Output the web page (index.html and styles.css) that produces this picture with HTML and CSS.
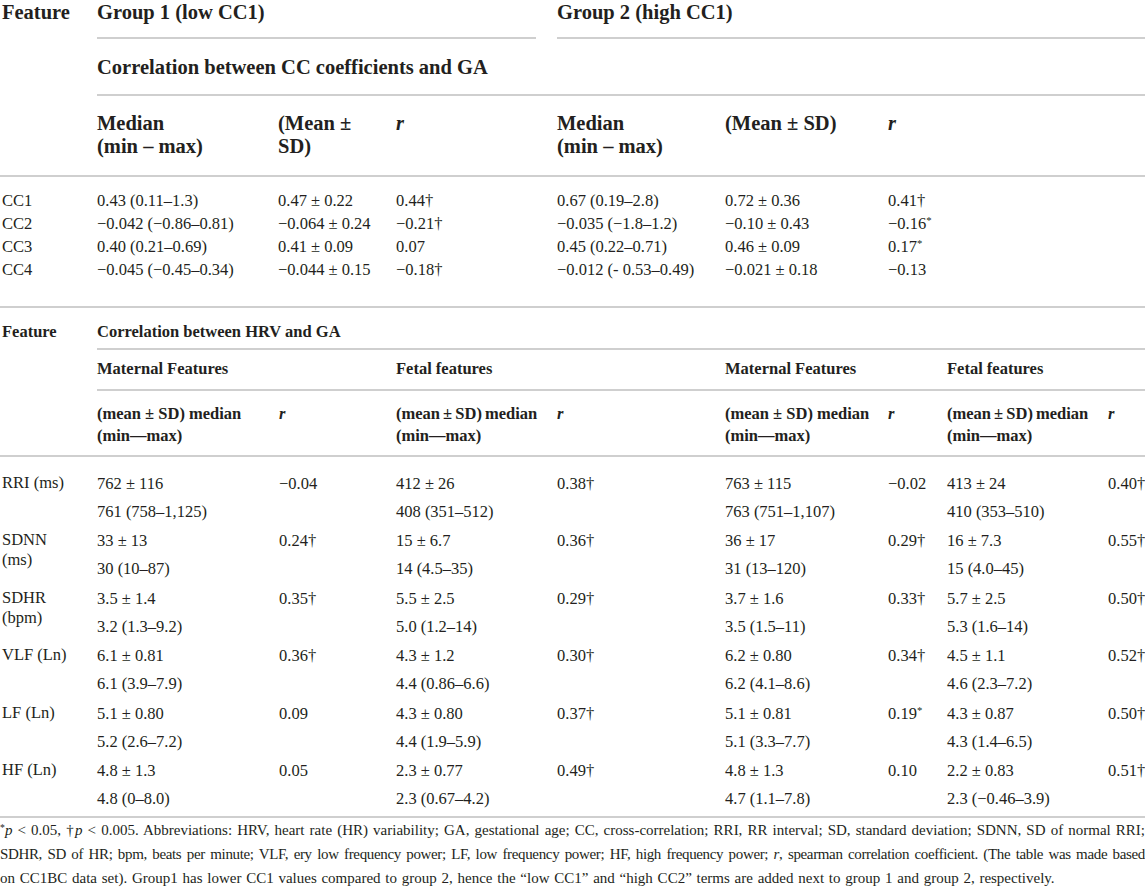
FILE: index.html
```html
<!DOCTYPE html>
<html lang="en">
<head>
    <meta charset="UTF-8">
    <title>CC coefficients and HRV vs GA</title>
    <link rel="stylesheet" href="styles.css">
</head>
<body>
    <div class="page">
        <!-- Part 1: cross-correlation coefficients -->
        <table class="cc">
            <colgroup>
                <col class="col-feature">
                <col class="cc-g1-median">
                <col class="cc-g1-mean">
                <col class="cc-g1-r">
                <col class="cc-g2-median">
                <col class="cc-g2-mean">
                <col class="cc-g2-r">
            </colgroup>
            <thead>
                <tr class="row-groups">
                    <th rowspan="3" class="feature rule">Feature</th>
                    <th colspan="3"><div class="group rule group-first">Group 1 (low CC1)</div></th>
                    <th colspan="3"><div class="group rule">Group 2 (high CC1)</div></th>
                </tr>
                <tr class="row-title">
                    <th colspan="6" class="rule">Correlation between CC coefficients and GA</th>
                </tr>
                <tr class="row-cols">
                    <th class="rule">Median<br>(min – max)</th>
                    <th class="rule">(Mean ±<br>SD)</th>
                    <th class="rule"><i>r</i></th>
                    <th class="rule">Median<br>(min – max)</th>
                    <th class="rule">(Mean ± SD)</th>
                    <th class="rule"><i>r</i></th>
                </tr>
            </thead>
            <tbody>
                <tr class="first">
                    <td class="feature">CC1</td>
                    <td>0.43 (0.11–1.3)</td>
                    <td>0.47 ± 0.22</td>
                    <td>0.44†</td>
                    <td>0.67 (0.19–2.8)</td>
                    <td>0.72 ± 0.36</td>
                    <td>0.41†</td>
                </tr>
                <tr>
                    <td class="feature">CC2</td>
                    <td>−0.042 (−0.86–0.81)</td>
                    <td>−0.064 ± 0.24</td>
                    <td>−0.21†</td>
                    <td>−0.035 (−1.8–1.2)</td>
                    <td>−0.10 ± 0.43</td>
                    <td>−0.16<sup class="sig">*</sup></td>
                </tr>
                <tr>
                    <td class="feature">CC3</td>
                    <td>0.40 (0.21–0.69)</td>
                    <td>0.41 ± 0.09</td>
                    <td>0.07</td>
                    <td>0.45 (0.22–0.71)</td>
                    <td>0.46 ± 0.09</td>
                    <td>0.17<sup class="sig">*</sup></td>
                </tr>
                <tr class="last">
                    <td class="feature">CC4</td>
                    <td>−0.045 (−0.45–0.34)</td>
                    <td>−0.044 ± 0.15</td>
                    <td>−0.18†</td>
                    <td>−0.012 (- 0.53–0.49)</td>
                    <td>−0.021 ± 0.18</td>
                    <td>−0.13</td>
                </tr>
            </tbody>
        </table>

        <!-- Part 2: heart rate variability -->
        <table class="hrv">
            <colgroup>
                <col class="col-feature">
                <col class="hrv-g1-mat">
                <col class="hrv-g1-mat-r">
                <col class="hrv-g1-fet">
                <col class="hrv-g1-fet-r">
                <col class="hrv-g2-mat">
                <col class="hrv-g2-mat-r">
                <col class="hrv-g2-fet">
                <col class="hrv-g2-fet-r">
            </colgroup>
            <thead>
                <tr class="row-title">
                    <th rowspan="3" class="feature rule">Feature</th>
                    <th colspan="8" class="rule">Correlation between HRV and GA</th>
                </tr>
                <tr class="row-sub">
                    <th colspan="2" class="rule">Maternal Features</th>
                    <th colspan="2" class="rule">Fetal features</th>
                    <th colspan="2" class="rule">Maternal Features</th>
                    <th colspan="2" class="rule">Fetal features</th>
                </tr>
                <tr class="row-cols">
                    <th class="rule">(mean ± SD) median<br>(min—max)</th>
                    <th class="rule"><i>r</i></th>
                    <th class="rule tight">(mean ± SD) median<br>(min—max)</th>
                    <th class="rule"><i>r</i></th>
                    <th class="rule">(mean ± SD) median<br>(min—max)</th>
                    <th class="rule"><i>r</i></th>
                    <th class="rule tight">(mean ± SD) median<br>(min—max)</th>
                    <th class="rule"><i>r</i></th>
                </tr>
            </thead>
            <tbody>
                <tr class="pair-top first">
                    <td rowspan="2" class="feature">RRI (ms)</td>
                    <td>762 ± 116</td>
                    <td rowspan="2">−0.04</td>
                    <td>412 ± 26</td>
                    <td rowspan="2">0.38†</td>
                    <td>763 ± 115</td>
                    <td rowspan="2">−0.02</td>
                    <td>413 ± 24</td>
                    <td rowspan="2">0.40†</td>
                </tr>
                <tr class="pair-bottom">
                    <td>761 (758–1,125)</td>
                    <td>408 (351–512)</td>
                    <td>763 (751–1,107)</td>
                    <td>410 (353–510)</td>
                </tr>

                <tr class="pair-top">
                    <td rowspan="2" class="feature">SDNN<br>(ms)</td>
                    <td>33 ± 13</td>
                    <td rowspan="2">0.24†</td>
                    <td>15 ± 6.7</td>
                    <td rowspan="2">0.36†</td>
                    <td>36 ± 17</td>
                    <td rowspan="2">0.29†</td>
                    <td>16 ± 7.3</td>
                    <td rowspan="2">0.55†</td>
                </tr>
                <tr class="pair-bottom">
                    <td>30 (10–87)</td>
                    <td>14 (4.5–35)</td>
                    <td>31 (13–120)</td>
                    <td>15 (4.0–45)</td>
                </tr>

                <tr class="pair-top">
                    <td rowspan="2" class="feature">SDHR<br>(bpm)</td>
                    <td>3.5 ± 1.4</td>
                    <td rowspan="2">0.35†</td>
                    <td>5.5 ± 2.5</td>
                    <td rowspan="2">0.29†</td>
                    <td>3.7 ± 1.6</td>
                    <td rowspan="2">0.33†</td>
                    <td>5.7 ± 2.5</td>
                    <td rowspan="2">0.50†</td>
                </tr>
                <tr class="pair-bottom">
                    <td>3.2 (1.3–9.2)</td>
                    <td>5.0 (1.2–14)</td>
                    <td>3.5 (1.5–11)</td>
                    <td>5.3 (1.6–14)</td>
                </tr>

                <tr class="pair-top">
                    <td rowspan="2" class="feature">VLF (Ln)</td>
                    <td>6.1 ± 0.81</td>
                    <td rowspan="2">0.36†</td>
                    <td>4.3 ± 1.2</td>
                    <td rowspan="2">0.30†</td>
                    <td>6.2 ± 0.80</td>
                    <td rowspan="2">0.34†</td>
                    <td>4.5 ± 1.1</td>
                    <td rowspan="2">0.52†</td>
                </tr>
                <tr class="pair-bottom">
                    <td>6.1 (3.9–7.9)</td>
                    <td>4.4 (0.86–6.6)</td>
                    <td>6.2 (4.1–8.6)</td>
                    <td>4.6 (2.3–7.2)</td>
                </tr>

                <tr class="pair-top">
                    <td rowspan="2" class="feature">LF (Ln)</td>
                    <td>5.1 ± 0.80</td>
                    <td rowspan="2">0.09</td>
                    <td>4.3 ± 0.80</td>
                    <td rowspan="2">0.37†</td>
                    <td>5.1 ± 0.81</td>
                    <td rowspan="2">0.19<sup class="sig">*</sup></td>
                    <td>4.3 ± 0.87</td>
                    <td rowspan="2">0.50†</td>
                </tr>
                <tr class="pair-bottom">
                    <td>5.2 (2.6–7.2)</td>
                    <td>4.4 (1.9–5.9)</td>
                    <td>5.1 (3.3–7.7)</td>
                    <td>4.3 (1.4–6.5)</td>
                </tr>

                <tr class="pair-top">
                    <td rowspan="2" class="feature rule">HF (Ln)</td>
                    <td>4.8 ± 1.3</td>
                    <td rowspan="2" class="rule">0.05</td>
                    <td>2.3 ± 0.77</td>
                    <td rowspan="2" class="rule">0.49†</td>
                    <td>4.8 ± 1.3</td>
                    <td rowspan="2" class="rule">0.10</td>
                    <td>2.2 ± 0.83</td>
                    <td rowspan="2" class="rule">0.51†</td>
                </tr>
                <tr class="pair-bottom last">
                    <td>4.8 (0–8.0)</td>
                    <td>2.3 (0.67–4.2)</td>
                    <td>4.7 (1.1–7.8)</td>
                    <td>2.3 (−0.46–3.9)</td>
                </tr>
            </tbody>
        </table>

        <p class="note">
            <span class="note-line"><sup class="sig">*</sup><i>p</i> &lt; 0.05, †<i>p</i> &lt; 0.005. Abbreviations: HRV, heart rate (HR) variability; GA, gestational age; CC, cross-correlation; RRI, RR interval; SD, standard deviation; SDNN, SD of normal RRI;</span>
            <span class="note-line condensed">SDHR, SD of HR; bpm, beats per minute; VLF, ery low frequency power; LF, low frequency power; HF, high frequency power; <i>r</i>, spearman correlation coefficient. (The table was made based</span>
            <span class="note-line">on CC1BC data set). Group1 has lower CC1 values compared to group 2, hence the “low CC1” and “high CC2” terms are added next to group 1 and group 2, respectively.</span>
        </p>
    </div>
</body>
</html>
```

FILE: styles.css
```css
/* General */
body {
    margin: 0;
    background: #fff;
    color: #231f20;
    font-family: "Liberation Serif", "Times New Roman", serif;
}

.page {
    width: 1145px;
}

table {
    width: 1145px;
    border-collapse: collapse;
    table-layout: fixed;
}

th, td {
    padding: 0;
    text-align: left;
    vertical-align: top;
    white-space: nowrap;
}

th {
    font-weight: bold;
}

.rule {
    border-bottom: 2px solid #cfcfcf;
}

.feature {
    padding-left: 2px;
}

.sig {
    font-size: 0.65em;
    line-height: 0;
    vertical-align: 0.45em;
}

/* Column widths */
.col-feature { width: 97px; }

.cc-g1-median { width: 181px; }
.cc-g1-mean   { width: 118px; }
.cc-g1-r      { width: 161px; }
.cc-g2-median { width: 168px; }
.cc-g2-mean   { width: 163px; }
.cc-g2-r      { width: 257px; }

.hrv-g1-mat   { width: 182px; }
.hrv-g1-mat-r { width: 117px; }
.hrv-g1-fet   { width: 161px; }
.hrv-g1-fet-r { width: 168px; }
.hrv-g2-mat   { width: 163px; }
.hrv-g2-mat-r { width: 59px; }
.hrv-g2-fet   { width: 161px; }
.hrv-g2-fet-r { width: 37px; }

/* Part 1 */
.cc th {
    font-size: 20.5px;
    line-height: 24px;
}

.cc .group {
    padding-bottom: 13px;
}

.cc .group-first {
    margin-right: 21px;
}

.cc .row-title th {
    padding: 16px 0 15px;
}

.cc .row-cols th {
    padding: 16px 0 17px;
    line-height: 23px;
}

.cc td {
    font-size: 16.5px;
    line-height: 23px;
}

.cc tr.first td {
    padding-top: 12px;
}

.cc tr.last td {
    padding-bottom: 25px;
    border-bottom: 2px solid #cfcfcf;
}

/* Part 2 */
.hrv th {
    font-size: 16.5px;
    line-height: 22px;
}

.hrv .row-title th {
    padding: 13px 0 5px;
}

.hrv .row-title th.feature {
    padding-left: 2px;
}

.hrv .row-sub th {
    padding: 8px 0 9px;
}

.hrv .row-cols th {
    padding: 12px 0 8px;
}

.hrv .row-cols th.tight {
    word-spacing: -1px;
}

.hrv td {
    font-size: 16.5px;
    line-height: 21px;
    padding-top: 5px;
}

.hrv td.feature {
    line-height: 20px;
    padding-left: 2px;
}

.hrv tr.pair-top td {
    padding-bottom: 2px;
}

.hrv tr.pair-top td[rowspan] {
    padding-bottom: 0;
}

.hrv tr.pair-bottom td {
    padding-bottom: 3.5px;
}

.hrv tr.first td {
    padding-top: 15.5px;
}

.hrv tr.last td {
    padding-bottom: 6.5px;
    border-bottom: 2px solid #cfcfcf;
}

/* Footnote */
.note {
    margin: 0;
    font-size: 15px;
    line-height: 24px;
}

.note-line {
    display: block;
    white-space: nowrap;
    text-align: justify;
    text-align-last: justify;
}

.note-line.condensed {
    letter-spacing: -0.35px;
    word-spacing: -1px;
}

.note-line:last-child {
    text-align-last: auto;
    word-spacing: 1px;
}
```
